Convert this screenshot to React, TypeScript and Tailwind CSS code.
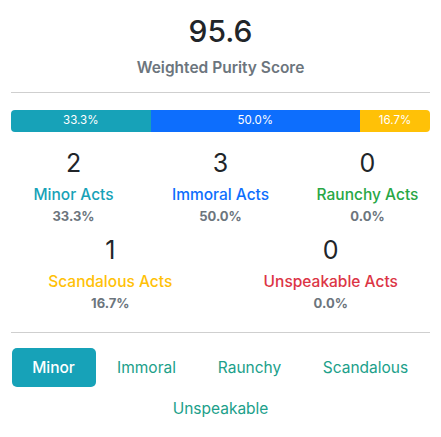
const segments = [
  { pct: 33.3, label: "33.3%", color: "bg-[#17a2b8]" },
  { pct: 50.0, label: "50.0%", color: "bg-[#0d6efd]" },
  { pct: 16.7, label: "16.7%", color: "bg-[#ffc107]" },
];

const tabs = [
  { name: "Immoral", width: "w-[102px]" },
  { name: "Raunchy", width: "w-[104px]" },
  { name: "Scandalous", width: "w-[128px]" },
  { name: "Unspeakable", width: "w-[130px]" },
];

const Stat = ({ count, label, pct, color }: { count: number; label: string; pct: string; color: string }) => (
  <div className="flex flex-col items-center">
    <div className="text-[25px] leading-[30px] text-[#212529]">{count}</div>
    <div className={`mt-[6px] text-[15.5px] leading-[22px] font-medium ${color}`}>{label}</div>
    <div className="text-[13px] leading-[20px] font-bold text-[#6c757d]">{pct}</div>
  </div>
);

export default function App() {
  return (
    <div className="w-[441px] h-[437px] bg-white px-[11px] pt-[14px] font-['Inter',sans-serif]">
      {/* Score header */}
      <div className="flex flex-col items-center">
        <div className="text-[30px] leading-[34px] font-medium text-[#212529]">95.6</div>
        <div className="mt-[10px] text-[15.5px] leading-[20px] font-semibold text-[#6c757d]">Weighted Purity Score</div>
      </div>
      <hr className="mt-[14px] border-t border-[#cfcfcf]" />

      {/* Distribution bar */}
      <div className="mt-[17px] flex h-[22px] rounded overflow-hidden">
        {segments.map((s) => (
          <div
            key={s.label}
            className={`${s.color} flex items-center justify-center text-[11.5px] text-white`}
            style={{ width: `${s.pct}%` }}
          >
            {s.label}
          </div>
        ))}
      </div>

      {/* Stats */}
      <div className="mt-[16px] -mx-[11px] grid grid-cols-3">
        <Stat count={2} label="Minor Acts" pct="33.3%" color="text-[#17a2b8]" />
        <Stat count={3} label="Immoral Acts" pct="50.0%" color="text-[#0d6efd]" />
        <Stat count={0} label="Raunchy Acts" pct="0.0%" color="text-[#28a745]" />
      </div>
      <div className="mt-[9px] -mx-[11px] grid grid-cols-2">
        <Stat count={1} label="Scandalous Acts" pct="16.7%" color="text-[#ffc107]" />
        <Stat count={0} label="Unspeakable Acts" pct="0.0%" color="text-[#dc3545]" />
      </div>
      <hr className="mt-[19px] border-t border-[#cfcfcf]" />

      {/* Tabs */}
      <div className="mt-[15px] flex flex-wrap justify-center gap-y-[2px] text-[15.5px]">
        <button className="h-[39px] w-[84px] rounded-[5px] bg-[#17a2b8] text-white font-medium">Minor</button>
        {tabs.map((t) => (
          <button key={t.name} className={`h-[39px] ${t.width} text-[#20a08a]`}>
            {t.name}
          </button>
        ))}
      </div>
    </div>
  );
}
